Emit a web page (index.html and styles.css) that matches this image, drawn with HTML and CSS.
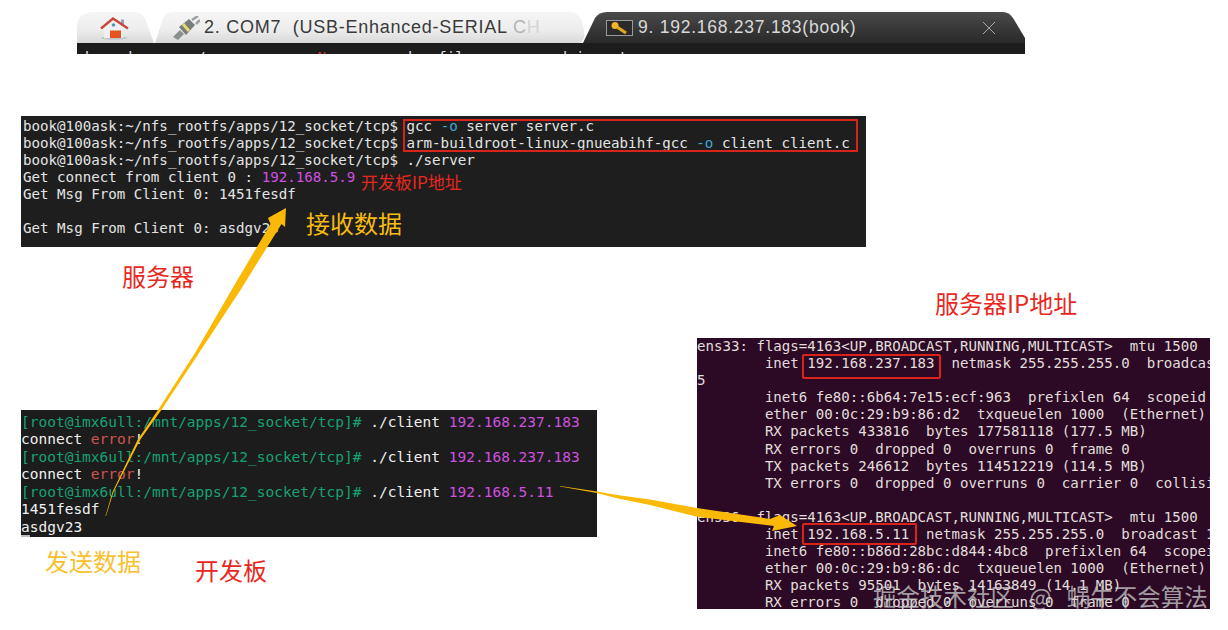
FILE: index.html
```html
<!DOCTYPE html>
<html lang="zh">
<head>
<meta charset="utf-8">
<title>TCP socket demo</title>
<link rel="stylesheet" href="styles.css">
</head>
<body>
<main class="canvas">
  <section class="tabstrip">
    <svg class="tab-shapes" width="948" height="42" viewBox="0 0 948 42">
      <defs>
        <linearGradient id="lt" x1="0" y1="0" x2="0" y2="1"><stop offset="0" stop-color="#f6f6f6"/><stop offset=".6" stop-color="#ececec"/><stop offset="1" stop-color="#d8d8d8"/></linearGradient>
        <linearGradient id="dk" x1="0" y1="0" x2="0" y2="1"><stop offset="0" stop-color="#4a4a4a"/><stop offset=".5" stop-color="#333"/><stop offset="1" stop-color="#1f1f1f"/></linearGradient>
      </defs>
      <path d="M0 31V12Q2 1 14 0H58Q64 0 68 6L77 31Z" fill="url(#lt)"/>
      <path d="M78 31L86 6Q89 0 96 0H494Q504 0 507 18Q509 27 503 31Z" fill="url(#lt)"/>
      <path d="M506 42V31L518 6Q522 0 530 0H926Q932 0 936 6L948 26V42Z" fill="url(#dk)"/>
      <rect x="0" y="31" width="948" height="11" fill="#1c1c1c"/>
    </svg>
    <div class="tab tab-home">
      <svg width="30" height="26" viewBox="0 0 30 26"><ellipse cx="15" cy="23" rx="13" ry="1.800" fill="#bfc7cd"/><path d="M5 13L14 6L24 13V23H5Z" fill="#eef0f1"/><rect x="22" y="4.500" width="3" height="6" fill="#8fa3b3"/><rect x="11" y="15.500" width="11" height="7.500" fill="#e8541f"/><circle cx="14.500" cy="10" r="1.800" fill="#4f97bd"/><path d="M2 13.500L14 3.500L29 13.500" fill="none" stroke="#c9453c" stroke-width="2.300"/></svg>
    </div>
    <div class="tab tab-serial">
      <svg width="28" height="24" viewBox="0 0 28 24"><path d="M1 21L8 14L12 18L6 24Z" fill="#8a8f8f"/><path d="M7 11L17 3L23 9L14 19Z" fill="#777c7c"/><path d="M11 8L17 15" stroke="#e7d96a" stroke-width="3"/><path d="M20 4L26 0M24 8L28 4" stroke="#9a9f9f" stroke-width="2.500"/></svg>
      <span class="tab-title">2. COM7&nbsp; (USB-Enhanced-SERIAL <span class="fade-a">C</span><span class="fade-b">H</span></span>
    </div>
    <div class="tab tab-book">
      <span class="key-box"><svg width="22" height="14" viewBox="0 0 22 14"><circle cx="6" cy="4.500" r="3.500" fill="#f0b429"/><path d="M8 6L17 12" stroke="#e6a81e" stroke-width="3.200"/></svg></span>
      <span class="tab-title light">9. 192.168.237.183(book)</span>
      <svg class="tab-close" width="14" height="14" viewBox="0 0 14 14"><path d="M1 1L13 13M13 1L1 13" stroke="#a8a8a8" stroke-width="1"/></svg>
    </div>
    <div class="strip-text">b    k       /             <span class="strip-red">N</span>         d   fil           d i    t</div>
  </section>

  <section class="term term-server">
    <div>book@100ask:~/nfs_rootfs/apps/12_socket/tcp$ gcc <span class="cyan">-o</span> server server.c</div>
    <div>book@100ask:~/nfs_rootfs/apps/12_socket/tcp$ arm-buildroot-linux-gnueabihf-gcc <span class="cyan">-o</span> client client.c</div>
    <div>book@100ask:~/nfs_rootfs/apps/12_socket/tcp$ ./server</div>
    <div>Get connect from client 0 : <span class="magenta">192.168.5.9</span></div>
    <div>Get Msg From Client 0: 1451fesdf</div>
    <div>&nbsp;</div>
    <div>Get Msg From Client 0: asdgv23</div>
    <div class="box box-cmd"></div>
  </section>

  <section class="term term-board">
    <div><span class="green">[root@imx6ull:/mnt/apps/12_socket/tcp]#</span> ./client <span class="magenta">192.168.237.183</span></div>
    <div>connect <span class="err">error</span>!</div>
    <div><span class="green">[root@imx6ull:/mnt/apps/12_socket/tcp]#</span> ./client <span class="magenta">192.168.237.183</span></div>
    <div>connect <span class="err">error</span>!</div>
    <div><span class="green">[root@imx6ull:/mnt/apps/12_socket/tcp]#</span> ./client <span class="magenta">192.168.5.11</span></div>
    <div>1451fesdf</div>
    <div>asdgv23</div>
    <i class="cursor"></i>
  </section>

  <section class="term term-host">
    <div>ens33: flags=4163&lt;UP,BROADCAST,RUNNING,MULTICAST&gt;  mtu 1500</div>
    <div>        inet 192.168.237.183  netmask 255.255.255.0  broadcast 192.168.237.255</div>
    <div>5</div>
    <div>        inet6 fe80::6b64:7e15:ecf:963  prefixlen 64  scopeid 0x20&lt;link&gt;</div>
    <div>        ether 00:0c:29:b9:86:d2  txqueuelen 1000  (Ethernet)</div>
    <div>        RX packets 433816  bytes 177581118 (177.5 MB)</div>
    <div>        RX errors 0  dropped 0  overruns 0  frame 0</div>
    <div>        TX packets 246612  bytes 114512219 (114.5 MB)</div>
    <div>        TX errors 0  dropped 0 overruns 0  carrier 0  collisions 0</div>
    <div>&nbsp;</div>
    <div>ens36: flags=4163&lt;UP,BROADCAST,RUNNING,MULTICAST&gt;  mtu 1500</div>
    <div>        inet 192.168.5.11  netmask 255.255.255.0  broadcast 192.168.5.255</div>
    <div>        inet6 fe80::b86d:28bc:d844:4bc8  prefixlen 64  scopeid 0x20&lt;link&gt;</div>
    <div>        ether 00:0c:29:b9:86:dc  txqueuelen 1000  (Ethernet)</div>
    <div>        RX packets 95501  bytes 14163849 (14.1 MB)</div>
    <div>        RX errors 0  dropped 0  overruns 0  frame 0</div>
    <div class="box box-ip1"></div>
    <div class="box box-ip2"></div>
  </section>

  <svg class="arrows" width="1228" height="630" viewBox="0 0 1228 630">
    <path d="M105.500 516L112.500 492L137.500 440L159.300 408L195 353L231.500 290L270.500 224L268 218L286 208L285 227L281.500 224L240.500 290L199 353L162.700 408L140 440L113.500 492L106 516Z" fill="#fab906"/>
    <path d="M560 486L597 491.500L617 495L650 499.500L697 508L770 519L780 515L797 526L772 531L774 526L697 516.700L650 505L617 498.300L597 493L560 486.500Z" fill="#fab906"/>
  </svg>

  <p class="label red small lbl-boardip">开发板IP地址</p>
  <p class="label amber lbl-recv">接收数据</p>
  <p class="label red lbl-server">服务器</p>
  <p class="label red lbl-serverip">服务器IP地址</p>
  <p class="label amber pale lbl-send">发送数据</p>
  <p class="label red lbl-board">开发板</p>
  <p class="watermark">掘金技术社区 @ 蜗牛不会算法</p>
</main>
</body>
</html>
```
FILE: styles.css
```css
html, body { margin: 0; padding: 0; background: #fff; overflow: hidden; }
.canvas { position: relative; width: 1228px; height: 630px; overflow: hidden; background: #fff; }

.tabstrip { position: absolute; left: 77px; top: 12px; width: 948px; height: 42px; overflow: hidden; display: flex; align-items: flex-start; font-family: "Liberation Sans", Arial, sans-serif; }
.tab-shapes { position: absolute; left: 0; top: 0; }
.tab { position: relative; height: 31px; display: flex; align-items: center; flex: none; }
.tab-home { width: 75px; padding-left: 22px; box-sizing: border-box; }
.tab-serial { width: 431px; padding-left: 20px; box-sizing: border-box; gap: 4px; }
.tab-serial .tab-title { font-size: 18px; }
.tab-book { width: 442px; padding-left: 23px; box-sizing: border-box; }
.tab-title { font-size: 17.500px; letter-spacing: .75px; color: #3a3a3a; white-space: nowrap; }
.tab-title.light { color: #d8d8d8; margin-left: 5px; }
.fade-a { color: #b4b4b4; }
.fade-b { color: #d4d4d4; }
.key-box { width: 25px; height: 14px; border: 1px solid #9a9a9a; background: #2a2a2a; display: flex; align-items: center; justify-content: center; }
.tab-close { margin-left: 126px; }
.strip-text { position: absolute; left: 8px; top: 37px; font: 14.300px/17px "DejaVu Sans Mono", monospace; color: #e6e6e6; white-space: pre; }
.strip-red { color: #d8332c; }

.term { position: absolute; box-sizing: border-box; overflow: hidden; font-family: "DejaVu Sans Mono", monospace; }
.term > div { white-space: pre; }
.term-server { left: 21px; top: 116px; width: 845px; height: 131px; padding: 1.500px 0 0 2px; background: #1e1e1e; color: #e4e4e4; font-size: 14.170px; line-height: 17px; }
.term-board { left: 21px; top: 410px; width: 576px; height: 127px; padding: 3.500px 0 0 0; background: #1c1c1c; color: #f0f0f0; font-size: 14.500px; line-height: 17.500px; }
.term-host { left: 697px; top: 338px; width: 513px; height: 271px; padding-top: 0; background: #2c0a26; color: #e2dedb; font-size: 14.100px; line-height: 17.100px; }
.cyan { color: #3fa9d8; }
.magenta { color: #d050e0; }
.green { color: #17a272; }
.err { color: #d05450; }
.cursor { position: absolute; left: 0; bottom: 0; width: 9px; height: 2px; background: #bbb; }

.box { position: absolute; box-sizing: border-box; border: 2px solid #d9241c; }
.box-cmd { left: 382px; top: 3px; width: 455px; height: 33px; }
.box-ip1 { left: 105px; top: 16px; width: 139px; height: 25px; border-radius: 2px; }
.box-ip2 { left: 105px; top: 185px; width: 115px; height: 22px; border-radius: 2px; }

.arrows { position: absolute; left: 0; top: 0; }

.label { position: absolute; margin: 0; font-family: "Noto Sans CJK SC", sans-serif; font-size: 24px; line-height: 30px; white-space: nowrap; font-weight: 400; }
.small { font-size: 17px; line-height: 22px; }
.red { color: #e8281e; }
.amber { color: #f7bb12; }
.pale { color: #f9c02e; }
.lbl-boardip { left: 361px; top: 171px; }
.lbl-recv { left: 306px; top: 208px; }
.lbl-server { left: 122px; top: 261px; }
.lbl-serverip { left: 935px; top: 288px; }
.lbl-send { left: 45px; top: 546px; }
.lbl-board { left: 195px; top: 555px; }
.watermark { position: absolute; left: 873px; top: 580px; margin: 0; font-family: "Noto Sans CJK SC", sans-serif; font-size: 23.500px; line-height: 32px; word-spacing: 10px; color: rgba(205,205,205,.75); white-space: nowrap; }
```
